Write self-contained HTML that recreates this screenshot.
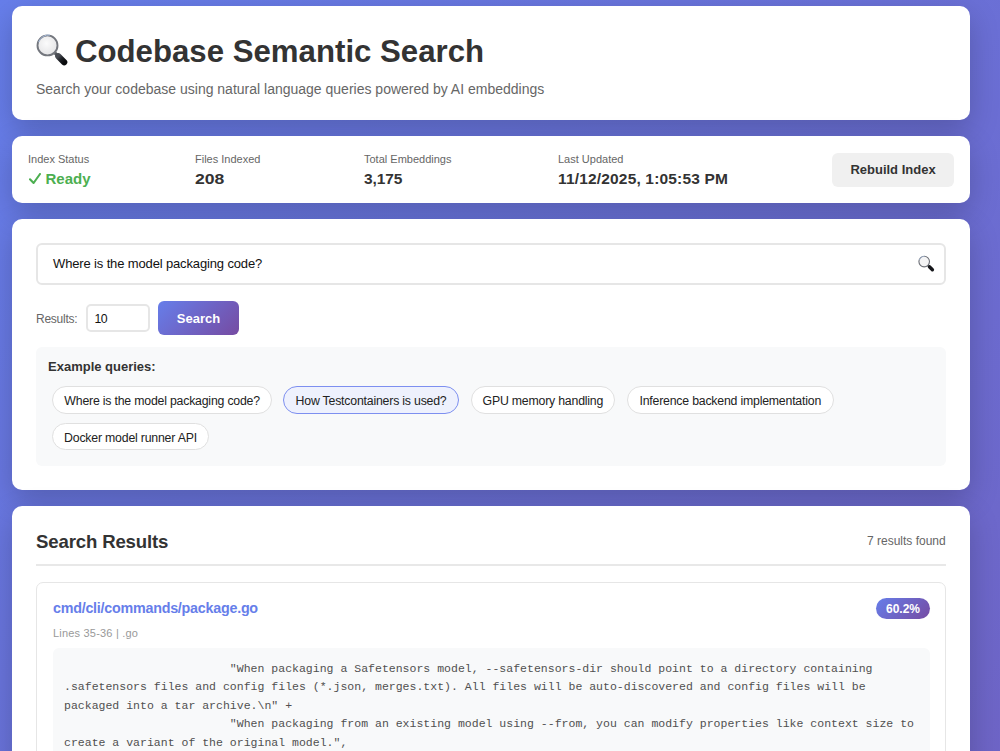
<!DOCTYPE html>
<html><head><meta charset="utf-8">
<style>
*{box-sizing:border-box;margin:0;padding:0}
html,body{width:1000px;height:751px;overflow:hidden}
body{position:relative;font-family:"Liberation Sans",sans-serif;color:#333;
background:linear-gradient(135deg,#667eea 0%,#764ba2 100%) no-repeat 0 0/1000px 2500px;}
.card{position:absolute;left:12px;width:958px;background:#fff;border-radius:10px;box-shadow:0 10px 30px rgba(0,0,0,0.2)}
.abs{position:absolute;white-space:pre;line-height:1}
.chip{position:absolute;height:27.2px;border:1px solid #e0e0e0;border-radius:14px;background:#fff;font-size:12.3px;letter-spacing:-0.2px;color:#222;text-align:center;line-height:28.2px;white-space:pre}
.chip.act{background:#eef1fd;border-color:#7d8ff0}
.code{position:absolute;left:52px;top:153.9px;font-family:"Liberation Mono",monospace;font-size:11.53px;line-height:18.4px;color:#505050;white-space:pre}
</style></head><body>

<!-- header card -->
<div class="card" style="top:6px;height:114px">
  <svg class="abs" style="left:24px;top:28px" width="32" height="32" viewBox="0 0 32 32">
    <defs>
      <radialGradient id="gl" cx="0.45" cy="0.4" r="0.6"><stop offset="0" stop-color="#fbfbfb"/><stop offset="1" stop-color="#e4e4e6"/></radialGradient>
      <linearGradient id="hd" x1="0" y1="0" x2="1" y2="1"><stop offset="0" stop-color="#4a4d54"/><stop offset="0.5" stop-color="#1d1f24"/><stop offset="1" stop-color="#0a0b0d"/></linearGradient>
    </defs>
    <path d="M19.4 19.4 L22.5 22.5" stroke="#55585e" stroke-width="3.2" stroke-linecap="round"/>
    <path d="M22.3 22.3 L28.2 28.2" stroke="url(#hd)" stroke-width="6.2" stroke-linecap="round"/>
    <circle cx="11.5" cy="11.4" r="10" fill="url(#gl)" stroke="#74777e" stroke-width="1.9"/>
    <path d="M2.6 8.2 A10.6 10.6 0 0 1 14 1" fill="none" stroke="#b4cdf2" stroke-width="1" opacity="0.8"/>
  </svg>
  <div class="abs" style="left:63px;top:30px;font-weight:bold;font-size:31.2px;color:#333">Codebase Semantic Search</div>
  <div class="abs" style="left:24px;top:76px;font-size:14px;color:#666">Search your codebase using natural language queries powered by AI embeddings</div>
</div>

<!-- stats card -->
<div class="card" style="top:136px;height:67px">
  <div class="abs" style="left:16px;top:18px;font-size:11px;color:#666">Index Status</div>
  <div class="abs" style="left:17px;top:37px;font-size:15px;font-weight:bold;color:#4caf50">
    <svg style="position:absolute;left:0;top:0" width="12" height="12" viewBox="0 0 12 12"><path d="M1 6.3 L4.6 10 L11 1" fill="none" stroke="#4caf50" stroke-width="2.1" stroke-linecap="round" stroke-linejoin="round"/></svg>
    <span style="position:absolute;left:16.5px;top:-2.2px">Ready</span></div>
  <div class="abs" style="left:183px;top:18px;font-size:11px;color:#666">Files Indexed</div>
  <div class="abs" style="left:183px;top:34.7px;font-size:15.5px;font-weight:bold;color:#333;transform:scaleX(1.135);transform-origin:0 0">208</div>
  <div class="abs" style="left:352px;top:18px;font-size:11px;color:#666">Total Embeddings</div>
  <div class="abs" style="left:352px;top:34.7px;font-size:15.5px;font-weight:bold;color:#333;letter-spacing:-0.1px">3,175</div>
  <div class="abs" style="left:546px;top:18px;font-size:11px;color:#666">Last Updated</div>
  <div class="abs" style="left:546px;top:34.7px;font-size:15.5px;font-weight:bold;color:#333;letter-spacing:0.17px">11/12/2025, 1:05:53 PM</div>
  <div class="abs" style="left:820px;top:17px;width:122px;height:34px;background:#f0f0f0;border-radius:6px"></div>
  <div class="abs" style="left:820px;top:26.7px;width:122px;text-align:center;font-size:13px;font-weight:bold;color:#333">Rebuild Index</div>
</div>

<!-- search card -->
<div class="card" style="top:219px;height:271px">
  <div class="abs" style="left:24px;top:24px;width:910px;height:42px;border:2px solid #e6e6e6;border-radius:6px"></div>
  <div class="abs" style="left:41px;top:38px;font-size:13px;color:#111;letter-spacing:-0.14px">Where is the model packaging code?</div>
  <div class="abs" style="left:24px;top:94px;font-size:12px;color:#666;letter-spacing:-0.25px">Results:</div>
  <div class="abs" style="left:74px;top:85px;width:64px;height:28px;border:2px solid #e6e6e6;border-radius:5px"></div>
  <div class="abs" style="left:82.5px;top:93.6px;font-size:12.3px;color:#111;letter-spacing:-0.6px">10</div>
  <div class="abs" style="left:146px;top:82px;width:81px;height:34px;border-radius:6px;background:linear-gradient(135deg,#667eea 0%,#764ba2 100%)"></div>
  <div class="abs" style="left:146px;top:92.5px;width:81px;text-align:center;font-size:13px;font-weight:bold;color:#fff">Search</div>
  <div class="abs" style="left:24px;top:128px;width:910px;height:119px;background:#f8f9fa;border-radius:6px"></div>
  <div class="abs" style="left:36px;top:141px;font-size:13px;font-weight:bold;color:#333">Example queries:</div>
  <div class="chip" style="left:40.3px;top:167.4px;width:219.7px">Where is the model packaging code?</div>
  <div class="chip act" style="left:271px;top:167.4px;width:176.1px">How Testcontainers is used?</div>
  <div class="chip" style="left:458.9px;top:167.4px;width:143.9px">GPU memory handling</div>
  <div class="chip" style="left:614.9px;top:167.4px;width:206.7px">Inference backend implementation</div>
  <div class="chip" style="left:40.3px;top:203.5px;width:156.4px">Docker model runner API</div>
  <svg class="abs" style="left:904px;top:35px" width="20" height="20" viewBox="0 0 20 20">
    <path d="M11.6 11 L13.2 12.6" stroke="#55585e" stroke-width="1.8" stroke-linecap="round"/>
    <path d="M13.4 12.8 L16.4 15.8" stroke="#15161a" stroke-width="3.4" stroke-linecap="round"/>
    <circle cx="8.2" cy="7.6" r="5.3" fill="#f4f4f5" stroke="#6d7077" stroke-width="1.1"/>
    <path d="M3.2 6 A5.6 5.6 0 0 1 8.6 2.2" fill="none" stroke="#b4cdf2" stroke-width="0.7" opacity="0.8"/>
  </svg>
</div>

<!-- results card -->
<div class="card" style="top:506px;height:400px">
  <div class="abs" style="left:24px;top:26.75px;font-size:18.6px;font-weight:bold;color:#333;letter-spacing:-0.15px">Search Results</div>
  <div class="abs" style="left:24px;top:58px;width:910px;height:2px;background:#e8e8e8"></div>
  <div class="abs" style="left:855px;top:28.8px;font-size:12px;color:#666">7 results found</div>
  <div class="abs" style="left:24px;top:76px;width:910px;height:400px;border:1px solid #e6e6e6;border-radius:7px"></div>
  <div class="abs" style="left:41px;top:95.2px;font-size:14.3px;font-weight:bold;color:#667eea;letter-spacing:-0.24px">cmd/cli/commands/package.go</div>
  <div class="abs" style="left:864px;top:92px;width:54px;height:21px;border-radius:11px;background:linear-gradient(135deg,#667eea 0%,#764ba2 100%)"></div>
  <div class="abs" style="left:864px;top:97px;width:54px;text-align:center;font-size:12px;font-weight:bold;color:#fff">60.2%</div>
  <div class="abs" style="left:41px;top:122px;font-size:11px;color:#999;letter-spacing:0.2px">Lines 35-36 | .go</div>
  <div class="abs" style="left:41px;top:142px;width:877px;height:300px;background:#f8f9fa;border-radius:6px"></div>
  <pre class="code">                        "When packaging a Safetensors model, --safetensors-dir should point to a directory containing
.safetensors files and config files (*.json, merges.txt). All files will be auto-discovered and config files will be
packaged into a tar archive.\n" +
                        "When packaging from an existing model using --from, you can modify properties like context size to
create a variant of the original model.",
                        Args: requireExactArgs(1, "package", "OUTPUT"),</pre>
</div>

</body></html>
